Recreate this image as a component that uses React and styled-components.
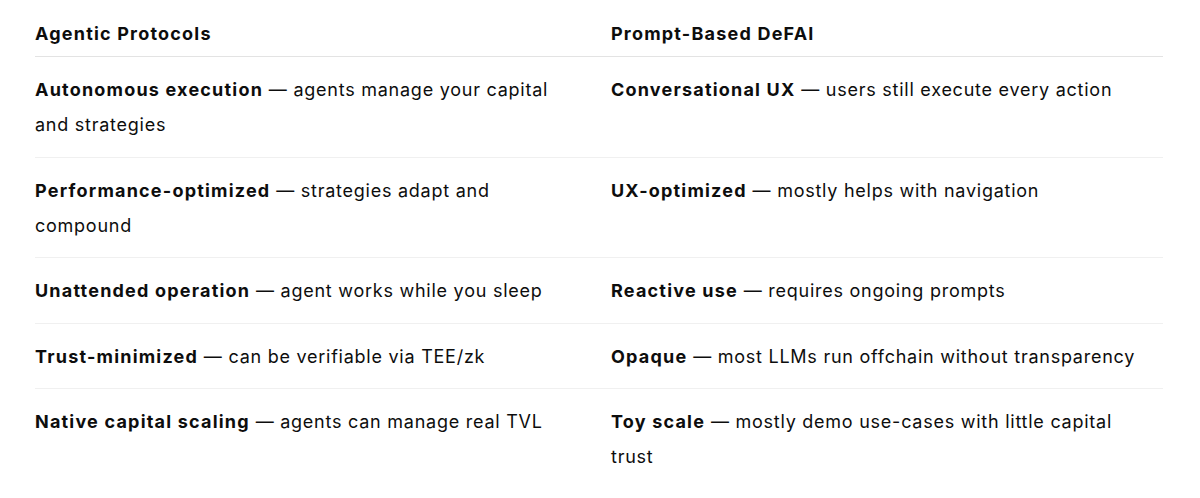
import React from "react";
import styled, { createGlobalStyle } from "styled-components";

const Global = createGlobalStyle`
  html, body { margin: 0; padding: 0; background: #ffffff; }
  body {
    font-family: Inter, "Noto Sans", "Liberation Sans", sans-serif;
    color: #0d0d0d;
    -webkit-font-smoothing: antialiased;
  }
`;

const Page = styled.div`
  padding: 0 37px 0 35px;
  width: 1200px;
  box-sizing: border-box;
`;

const Table = styled.div`
  display: flex;
  flex-direction: column;
  width: 1128px;
`;

const Row = styled.div`
  display: grid;
  grid-template-columns: 530px 1fr;
  column-gap: 46px;
  padding: ${(p) => (p.$head ? "16px 12px 5px 0" : "15px 12px 14.5px 0")};
  border-bottom: 1px solid
    ${(p) => (p.$head ? "#e3e3e3" : p.$last ? "transparent" : "#f0f0f0")};
`;

const HeadCell = styled.div`
  font-size: 18px;
  font-weight: 700;
  letter-spacing: 1.2px;
  line-height: 35px;
`;

const Cell = styled.div`
  font-size: 18px;
  font-weight: 400;
  letter-spacing: 0.75px;
  line-height: 35px;
`;

const Strong = styled.strong`
  font-weight: 700;
  letter-spacing: 1.2px;
`;

const rows = [
  [
    ["Autonomous execution", "agents manage your capital and strategies"],
    ["Conversational UX", "users still execute every action"],
  ],
  [
    ["Performance-optimized", "strategies adapt and compound"],
    ["UX-optimized", "mostly helps with navigation"],
  ],
  [
    ["Unattended operation", "agent works while you sleep"],
    ["Reactive use", "requires ongoing prompts"],
  ],
  [
    ["Trust-minimized", "can be verifiable via TEE/zk"],
    ["Opaque", "most LLMs run offchain without transparency"],
  ],
  [
    ["Native capital scaling", "agents can manage real TVL"],
    ["Toy scale", "mostly demo use-cases with little capital trust"],
  ],
];

export default function App() {
  return (
    <>
      <Global />
      <Page>
        <Table>
          <Row $head>
            <HeadCell>Agentic Protocols</HeadCell>
            <HeadCell>Prompt-Based DeFAI</HeadCell>
          </Row>
          {rows.map((row, i) => (
            <Row key={i} $last={i === rows.length - 1}>
              {row.map(([b, t], j) => (
                <Cell key={j}>
                  <Strong>{b}</Strong> — {t}
                </Cell>
              ))}
            </Row>
          ))}
        </Table>
      </Page>
    </>
  );
}
